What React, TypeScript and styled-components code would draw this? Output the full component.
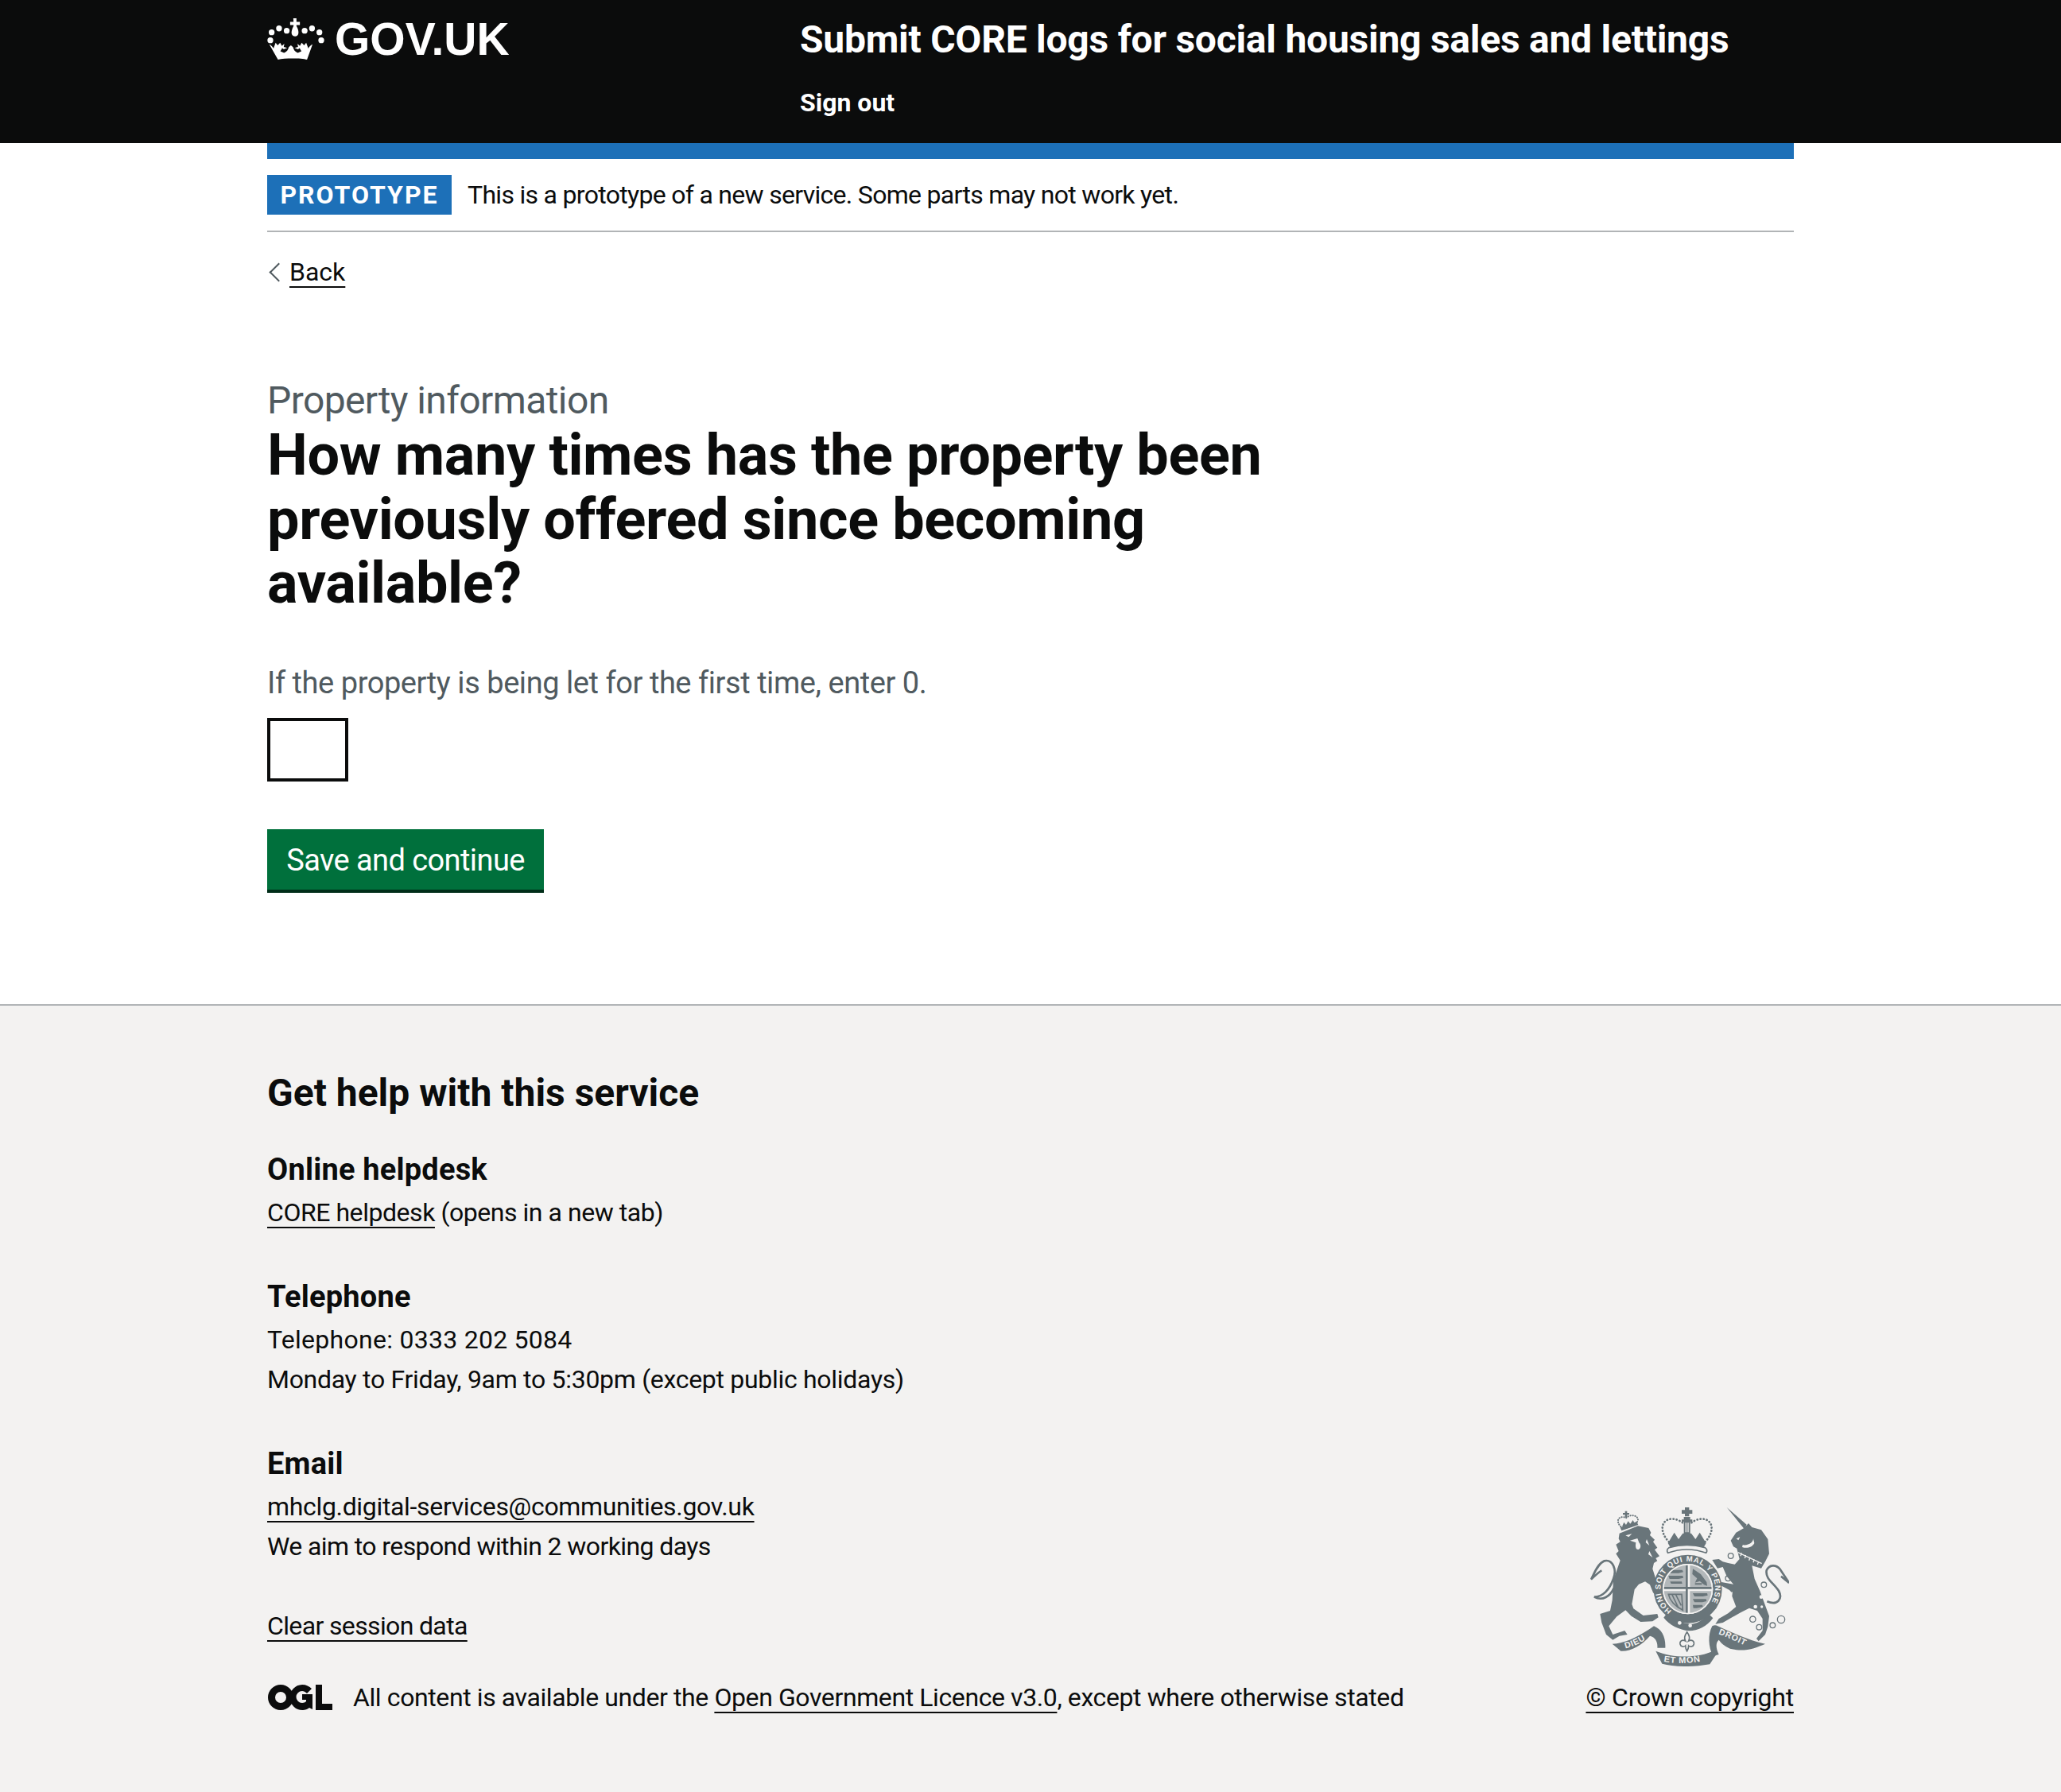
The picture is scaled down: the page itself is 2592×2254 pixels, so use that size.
import React from 'react'
import styled, { createGlobalStyle } from 'styled-components'

const GlobalStyle = createGlobalStyle`
  html, body {
    margin: 0;
    padding: 0;
    background: #fff;
    color: #0b0c0c;
    font-family: Roboto, "Noto Sans", "Liberation Sans", sans-serif;
  }
`

const Container = styled.div`
  width: 1920px;
  margin: 0 auto;
`

const Header = styled.header`
  background: #0b0c0c;
  height: 180px;
  color: #fff;
`

const HeaderInner = styled(Container)`
  display: flex;
`

const Logo = styled.div`
  width: 670px;
  height: 98px;
  display: flex;
  align-items: center;
  gap: 13px;
  font-family: "Liberation Sans", Arial, sans-serif;
  font-weight: 700;
  font-size: 57px;
`

const ServiceBlock = styled.div`
  padding-top: 22px;
`

const ServiceName = styled.div`
  font-size: 48px;
  line-height: 56px;
  font-weight: 700;
  letter-spacing: -0.25px;
`

const SignOut = styled.div`
  margin-top: 27px;
  font-size: 32px;
  line-height: 48px;
  font-weight: 700;
`

const PhaseBanner = styled.div`
  border-top: 20px solid #1d70b8;
  border-bottom: 2px solid #b1b4b6;
  padding: 20px 0;
  display: flex;
  align-items: center;
  gap: 20px;
`

const Tag = styled.strong`
  background: #1d70b8;
  color: #fff;
  width: 232px;
  height: 50px;
  box-sizing: border-box;
  display: flex;
  align-items: center;
  justify-content: center;
  font-size: 32px;
  font-weight: 700;
  letter-spacing: 2px;
`

const PhaseText = styled.span`
  font-size: 32px;
  line-height: 50px;
  letter-spacing: -0.7px;
`

const TextLink = styled.a`
  color: #0b0c0c;
  text-decoration: underline;
  text-decoration-thickness: 2px;
  text-underline-offset: 7px;
  text-decoration-skip-ink: none;
`

const BackRow = styled.div`
  margin-top: 28px;
  display: flex;
  align-items: center;
  gap: 5px;
  font-size: 32px;
  line-height: 44px;
`

const Chevron = styled.span`
  width: 15px;
  height: 15px;
  margin-left: 6px;
  border-left: 2px solid #505a5f;
  border-bottom: 2px solid #505a5f;
  transform: rotate(45deg);
`

const Main = styled.main`
  padding-top: 112px;
  padding-bottom: 140.5px;
`

const Caption = styled.div`
  font-size: 48px;
  line-height: 56px;
  color: #505a5f;
  letter-spacing: -0.6px;
`

const Title = styled.h1`
  margin: 1px 0 0;
  width: 1280px;
  font-size: 72px;
  line-height: 80.5px;
  font-weight: 700;
  letter-spacing: -0.36px;
`

const Hint = styled.div`
  margin-top: 59px;
  font-size: 38px;
  line-height: 50px;
  color: #505a5f;
  letter-spacing: -0.45px;
`

const NumberInput = styled.input`
  display: block;
  margin-top: 19px;
  box-sizing: border-box;
  width: 102px;
  height: 80px;
  border: 4px solid #0b0c0c;
  border-radius: 0;
  background: #fff;
`

const SubmitButton = styled.button`
  display: block;
  margin-top: 60px;
  width: 348px;
  height: 76px;
  border: 0;
  border-radius: 0;
  padding: 3px 0 0;
  margin-bottom: 4px;
  background: #00703c;
  box-shadow: 0 4px 0 #002d18;
  color: #fff;
  font-family: inherit;
  font-size: 38px;
  letter-spacing: -0.58px;
`

const Footer = styled.footer`
  background: #f3f2f1;
  border-top: 2px solid #b1b4b6;
  height: 991px;
  box-sizing: border-box;
`

const FooterInner = styled(Container)`
  display: flex;
  justify-content: space-between;
  align-items: flex-end;
  padding-top: 78px;
`

const FooterHeading = styled.h2`
  margin: 0;
  font-size: 48px;
  line-height: 64px;
  font-weight: 700;
`

const HelpGroup = styled.section`
  margin-top: 39px;
  & + & {
    margin-top: 56px;
  }
`

const HelpTitle = styled.h3`
  margin: 0 0 4px;
  font-size: 38px;
  line-height: 50px;
  font-weight: 700;
  letter-spacing: 0.2px;
`

const HelpLine = styled.div<{ $spacing?: number }>`
  font-size: 32px;
  line-height: 50px;
  letter-spacing: ${({ $spacing = 0 }) => $spacing}px;
`

const ClearRow = styled(HelpLine)`
  margin-top: 50px;
`

const LicenceRow = styled.div`
  margin-top: 40px;
  display: flex;
  align-items: center;
  gap: 26px;
  font-size: 32px;
  line-height: 50px;
  letter-spacing: -0.4px;
`

const CrownColumn = styled.div`
  display: flex;
  flex-direction: column;
  align-items: center;
  gap: 14px;
  font-size: 32px;
  line-height: 50px;
  letter-spacing: -0.2px;
`

const CrownLogo = () => (
  <svg width="72" height="52" viewBox="48 65 217 156" fill="#fff" aria-hidden="true">
    <circle cx="65" cy="118" r="11" />
    <circle cx="93" cy="103" r="11" />
    <circle cx="122" cy="112" r="11" />
    <circle cx="190" cy="112" r="11" />
    <circle cx="218" cy="103" r="11" />
    <circle cx="246" cy="118" r="11" />
    <circle cx="60" cy="148" r="11" />
    <circle cx="253" cy="148" r="11" />
    <path d="M147 65h12v13h13v12h-13v4c7 12 9 22 7 30-2 6-6 9-12 9s-11-3-13-9c-2-8 1-18 7-30v-4h-13V78h13z" />
    <path d="M56 163c8 4 14 10 16 16l8-22 8 10 9-10 7 12 9-8-2 12 13 4-13 5-6-4-7 12 14 6c10-4 16-12 18-22l8-7 8 7c2 10 8 18 18 22l14-6-7-12-6 4-13-5 13-4-2-12 9 8 7-12 9 10 8-10 8 22c2-6 8-12 16-16l-21 58c-24-6-84-6-110 0z" />
  </svg>
)

const GREY = '#69757a'
const PAPER = '#f3f2f1'

// Royal arms, traced by eye from the reference at 3x
const RoyalArms = () => (
  <svg width="250" height="200" viewBox="15 30 750 600" aria-hidden="true">
    <defs>
      <path id="garter" d="M322 420A103 103 0 1 1 444 420" />
      <path id="ribbon-left" d="M148 562C190 552 225 530 258 506" />
      <path id="ribbon-mid" d="M292 612C340 622 420 620 470 600" />
      <path id="ribbon-right" d="M498 508C540 522 585 545 625 566" />
      <clipPath id="shield-clip">
        <circle cx="383" cy="338" r="90" />
      </clipPath>
    </defs>

    {/* lion */}
    <path
      fill={GREY}
      d="M125 128L195 100L235 108L244 125L240 135L258 152L252 160L268 182L258 190L276 214L262 222L268 232L255 240L250 262L262 300L285 345L290 368L272 372L252 352L240 322L222 310L198 320L182 340L172 395L178 412L215 438L268 432L272 445L250 460L205 462L170 440L148 418L115 442L85 478L100 510L145 495L155 510L125 515L100 530L75 510L58 465L52 432L90 420L98 380L102 305L128 230L112 205L122 195L112 170L128 160L122 148Z"
    />
    <path fill={PAPER} d="M148 136l24-6-12 12zM165 155l28-8 6 16c8 8 8 22-2 26-12 2-12-14-10-26z" />
    <path fill={PAPER} d="M228 150l10 24-14-12zM238 195l12 24-16-12z" />
    <path
      fill="none"
      stroke={GREY}
      strokeWidth="8"
      d="M104 335C90 365 62 385 30 368C62 368 88 340 102 300C116 265 100 225 68 232C40 245 28 285 18 302C30 290 45 275 58 268"
    />
    <path fill={GREY} d="M128 106L190 84L196 96L133 118ZM146 44h8v7h8v7h-8v10h-8V58h-8v-7h8z" />
    <path
      fill="none"
      stroke={GREY}
      strokeWidth="6"
      strokeDasharray="1 8"
      strokeLinecap="round"
      d="M130 102C106 78 128 58 150 70C174 48 206 68 191 86"
    />
    <path fill={GREY} d="M136 100l6-14 8 10 8-14 8 10 10-14 6 12 4 8-46 16z" />

    {/* unicorn */}
    <g transform="translate(390 0)">
      <path
        fill={GREY}
        d="M140 30L215 95L205 110ZM155 155L175 125L205 108L222 90L235 105L270 115L295 150L300 205L285 235L270 260L235 250L245 300L265 345L285 400L300 440L295 480L285 510L260 535L252 525L275 495L275 450L255 420L225 410L195 425L160 445L125 465L97 470L110 450L145 430L175 405L160 365L165 320L140 290L125 255L105 260L85 228L110 225L125 235L145 240L170 245L188 225L178 185L165 178Z"
      />
      <path fill={GREY} d="M165 320L120 312L118 325L150 342L158 350L170 345Z" />
      <path fill={PAPER} d="M200 172C225 175 240 160 240 148L244 165C235 182 215 186 198 180ZM176 148l14-6-6 12z" />
      <path
        fill="none"
        stroke={PAPER}
        strokeWidth="4"
        d="M182 200L272 242M192 214l4-12M208 222l4-12M224 230l4-12M240 238l4-12M256 246l4-12"
      />
      <path
        fill="none"
        stroke={GREY}
        strokeWidth="8"
        d="M292 385C332 402 352 375 336 345C316 315 285 300 290 268C300 245 325 245 340 262L375 315L345 290"
      />
      <g fill="none" stroke={GREY} strokeWidth="4">
        <circle cx="155" cy="213" r="10" />
        <circle cx="145" cy="298" r="10" />
        <circle cx="280" cy="322" r="10" />
        <circle cx="238" cy="452" r="11" />
        <circle cx="262" cy="482" r="10" />
        <circle cx="313" cy="475" r="10" />
        <circle cx="345" cy="453" r="14" />
      </g>
      <circle cx="270" cy="368" r="7" fill={PAPER} />
      <circle cx="248" cy="405" r="7" fill={PAPER} />
      <circle cx="272" cy="405" r="5" fill={PAPER} />
    </g>

    {/* crown */}
    <g fill={GREY}>
      <path d="M372 30h16v10h12v14h-12v10h-16V54h-12V40h12z" />
      <path d="M368 66h24v10h8v8h-8v46h-24V84h-8v-8h8z" />
      <path d="M308 165L332 125L348 150L364 128L396 128L412 150L428 125L452 165L442 182Q380 160 318 182Z" />
    </g>
    <path fill={PAPER} d="M374 88h4v36h-4zM382 88h4v36h-4z" />
    <path
      fill="none"
      stroke={GREY}
      strokeWidth="8"
      strokeDasharray="1 11"
      strokeLinecap="round"
      d="M312 160C276 125 280 78 318 74C340 72 356 82 366 90M448 160C484 125 480 78 442 74C420 72 404 82 394 90"
    />
    <path
      fill={PAPER}
      stroke={GREY}
      strokeWidth="5"
      d="M308 202Q380 176 452 202Q460 190 448 182Q380 162 312 182Q300 190 308 202Z"
    />

    {/* garter and shield */}
    <circle cx="383" cy="338" r="112" fill="none" stroke={GREY} strokeWidth="34" />
    <circle cx="383" cy="338" r="95" fill={PAPER} />
    <text fontFamily="Liberation Sans, sans-serif" fontSize="29" fontWeight="700" fill={PAPER} letterSpacing="2.5">
      <textPath href="#garter">HONI SOIT QUI MAL Y PENSE</textPath>
    </text>
    <g clipPath="url(#shield-clip)">
      <path fill="#b3b8ba" d="M293 248h82v82h-82zM391 248h82v82h-82zM391 346h82v92h-82zM293 346h82v92h-82z" />
      <path fill={GREY} d="M375 245h8v195h-8zM290 330h186v8H290z" />
      <g fill={GREY}>
        <path d="M312 266h50l4 8-18 4h-30zM310 288h54l2 8-18 4h-34zM316 310h44l2 8h-42z" />
        <path d="M402 262l30 20 22 30 2 14-12-4-16-14-18 6 8-16-18-16zM410 316h26v6h-26z" />
        <path d="M402 354h54l2 8-18 4h-32zM402 376h50l2 8-16 4h-30zM402 398h36l2 8-24 4h-12z" />
      </g>
      <path fill="none" stroke={GREY} strokeWidth="5" d="M310 358h50l4 60c-26-14-48-32-54-60zM324 360l24 50M338 360l20 40" />
    </g>
    <path fill={GREY} d="M305 428C330 458 370 470 400 470C425 466 445 450 462 432L478 448C455 480 420 496 388 496C350 492 315 475 292 446Z" />
    <circle cx="352" cy="466" r="7" fill={PAPER} />
    <circle cx="392" cy="476" r="7" fill={PAPER} />

    {/* motto */}
    <g fill={GREY}>
      <path d="M98 545C150 545 210 510 255 478C285 490 300 520 298 560L268 560C270 540 262 520 240 515C210 550 165 575 130 572Z" />
      <path d="M262 572C330 600 420 600 484 570L490 585L466 622C400 634 330 632 286 620Z" />
      <path d="M475 478C482 474 490 474 496 478C540 498 610 532 675 545C640 560 600 576 550 565C530 560 510 545 500 530C488 540 488 560 500 585L478 592C460 556 458 510 475 478Z" />
    </g>
    <path
      fill={PAPER}
      stroke={GREY}
      strokeWidth="5"
      d="M380 500c10 14 12 24 6 34 12-6 22 0 20 12-2 10-14 12-20 6 0 8-2 14-6 20-4-6-6-12-6-20-6 6-18 4-20-6-2-12 8-18 20-12-6-10-4-20 6-34z"
    />
    <g fontFamily="Liberation Sans, sans-serif" fontSize="32" fontWeight="700" fill={PAPER} letterSpacing="2">
      <text><textPath href="#ribbon-left">DIEU</textPath></text>
      <text fontSize="33"><textPath href="#ribbon-mid">ET MON</textPath></text>
      <text><textPath href="#ribbon-right">DROIT</textPath></text>
    </g>
  </svg>
)

const OglLogo = () => (
  <svg width="82" height="34" viewBox="0 0 82 34" fill="#0b0c0c" aria-hidden="true">
    <path fillRule="evenodd" d="M17 1a16 16 0 1 1 0 32 16 16 0 0 1 0-32zm0 9a7 7 0 1 0 0 14 7 7 0 0 0 0-14z" />
    <path fillRule="evenodd" d="M44 1c5 0 9 2 12 5l-6 6c-2-2-4-3-6-3a7.500 7.500 0 0 0 0 15c2 0 4-1 5-2v-2h-5v-7h13v19l-4-2c-2 2-6 3-8 3a16 16 0 0 1-1-32z" />
    <path d="M61 1h8v24h13v8H61z" />
  </svg>
)

const App: React.FC = () => (
  <>
    <GlobalStyle />
    <Header>
      <HeaderInner>
        <Logo>
          <CrownLogo />
          GOV.UK
        </Logo>
        <ServiceBlock>
          <ServiceName>Submit CORE logs for social housing sales and lettings</ServiceName>
          <SignOut>Sign out</SignOut>
        </ServiceBlock>
      </HeaderInner>
    </Header>

    <Container>
      <PhaseBanner>
        <Tag>PROTOTYPE</Tag>
        <PhaseText>This is a prototype of a new service. Some parts may not work yet.</PhaseText>
      </PhaseBanner>
      <BackRow>
        <Chevron />
        <TextLink href="#">Back</TextLink>
      </BackRow>
      <Main>
        <Caption>Property information</Caption>
        <Title>How many times has the property been previously offered since becoming available?</Title>
        <Hint>If the property is being let for the first time, enter 0.</Hint>
        <NumberInput type="text" />
        <SubmitButton>Save and continue</SubmitButton>
      </Main>
    </Container>

    <Footer>
      <FooterInner>
        <div>
          <FooterHeading>Get help with this service</FooterHeading>
          <HelpGroup>
            <HelpTitle>Online helpdesk</HelpTitle>
            <HelpLine $spacing={-0.45}>
              <TextLink href="#">CORE helpdesk</TextLink> (opens in a new tab)
            </HelpLine>
          </HelpGroup>
          <HelpGroup>
            <HelpTitle>Telephone</HelpTitle>
            <HelpLine $spacing={0.27}>Telephone: 0333 202 5084</HelpLine>
            <HelpLine $spacing={-0.3}>Monday to Friday, 9am to 5:30pm (except public holidays)</HelpLine>
          </HelpGroup>
          <HelpGroup>
            <HelpTitle>Email</HelpTitle>
            <HelpLine $spacing={-0.33}>
              <TextLink href="#">mhclg.digital-services@communities.gov.uk</TextLink>
            </HelpLine>
            <HelpLine $spacing={-0.6}>We aim to respond within 2 working days</HelpLine>
          </HelpGroup>
          <ClearRow $spacing={-0.64}>
            <TextLink href="#">Clear session data</TextLink>
          </ClearRow>
          <LicenceRow>
            <OglLogo />
            <span>
              All content is available under the <TextLink href="#">Open Government Licence v3.0</TextLink>, except where otherwise stated
            </span>
          </LicenceRow>
        </div>
        <CrownColumn>
          <RoyalArms />
          <TextLink href="#">© Crown copyright</TextLink>
        </CrownColumn>
      </FooterInner>
    </Footer>
  </>
)

export default App
